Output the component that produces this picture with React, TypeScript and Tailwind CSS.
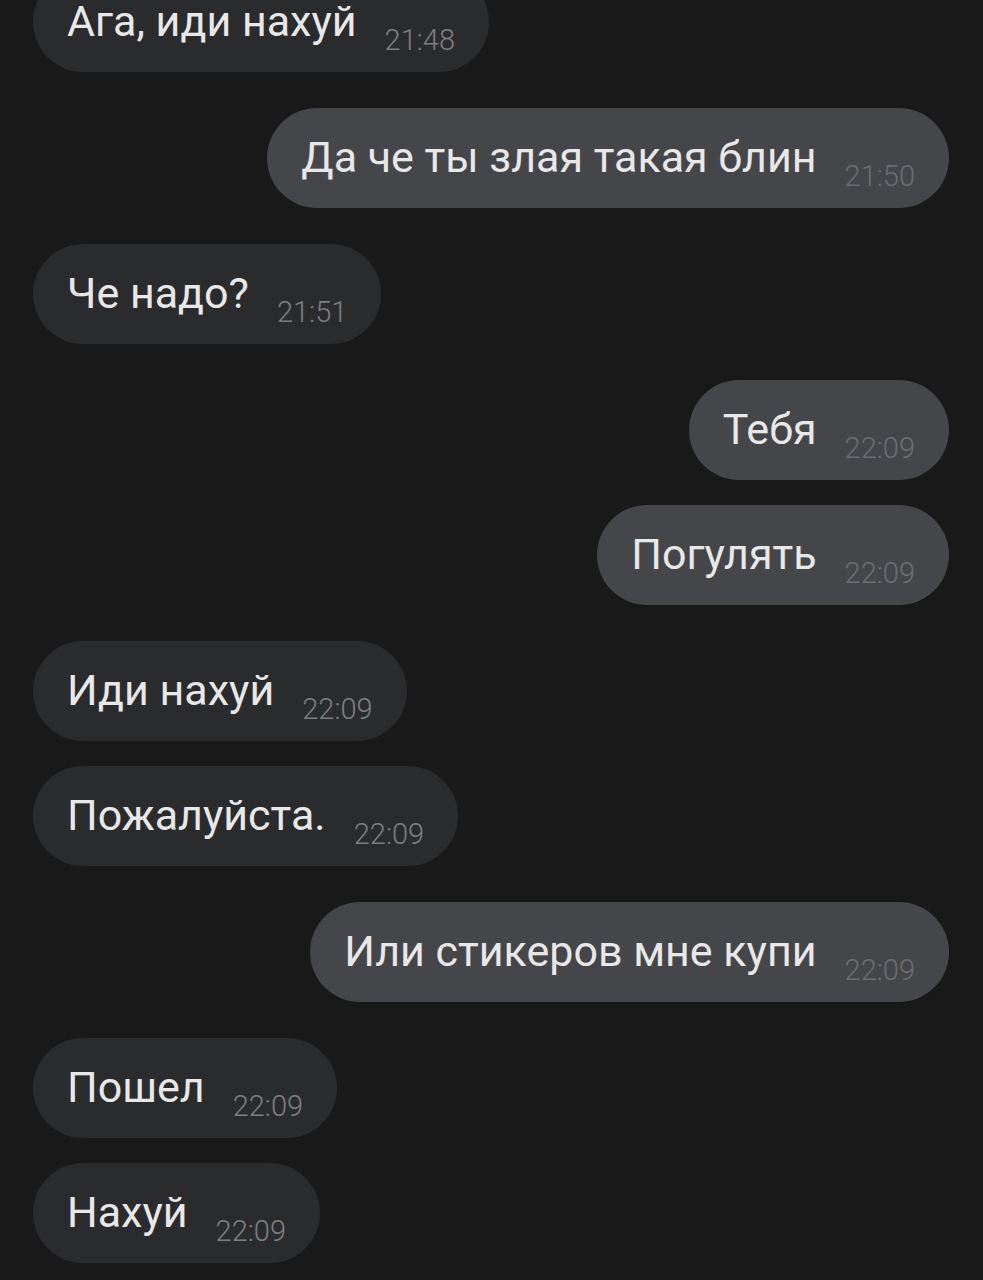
import React from "react";

type Msg = { text: string; time: string; out: boolean };

const msgs: Msg[] = [
  { text: "Ага, иди нахуй", time: "21:48", out: false },
  { text: "Да че ты злая такая блин", time: "21:50", out: true },
  { text: "Че надо?", time: "21:51", out: false },
  { text: "Тебя", time: "22:09", out: true },
  { text: "Погулять", time: "22:09", out: true },
  { text: "Иди нахуй", time: "22:09", out: false },
  { text: "Пожалуйста.", time: "22:09", out: false },
  { text: "Или стикеров мне купи", time: "22:09", out: true },
  { text: "Пошел", time: "22:09", out: false },
  { text: "Нахуй", time: "22:09", out: false },
];

export default function App() {
  return (
    <div
      className="w-[983px] h-[1280px] overflow-hidden bg-[#19191a]"
      style={{ fontFamily: "Roboto, 'Noto Sans', sans-serif" }}
    >
      <div className="flex flex-col pl-[33px] pr-[34px] mt-[-28px]">
        {msgs.map((m, i) => {
          const prev = msgs[i - 1];
          const gap = i === 0 ? "" : prev.out === m.out ? "mt-[25px]" : "mt-[36px]";
          return (
            <div
              key={i}
              className={`flex ${m.out ? "justify-end" : "justify-start"} ${gap}`}
            >
              <div
                className={`h-[100px] rounded-full flex items-center pl-[34px] pr-[34px] ${
                  m.out ? "bg-[#454649]" : "bg-[#2a2b2d]"
                }`}
              >
                <div className="flex items-baseline">
                  <span className="text-[43px] leading-[50px] text-[#e8e8e8]">
                    {m.text}
                  </span>
                  <span
                    className={`ml-[28px] text-[29px] font-light translate-y-[14px] ${
                      m.out ? "text-[#6c6d70]" : "text-[#7d7e80]"
                    }`}
                  >
                    {m.time}
                  </span>
                </div>
              </div>
            </div>
          );
        })}
      </div>
    </div>
  );
}
